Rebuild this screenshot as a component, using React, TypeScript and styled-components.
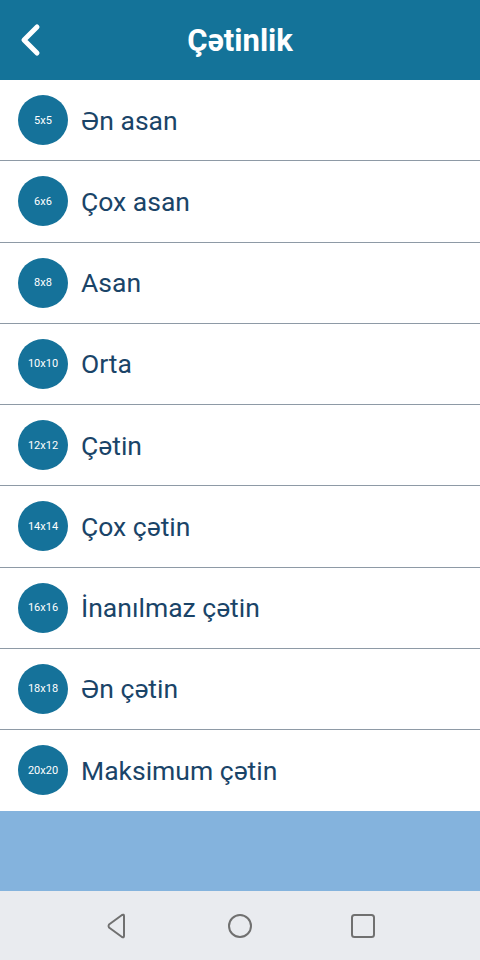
import styled, { createGlobalStyle } from 'styled-components';

const GlobalStyle = createGlobalStyle`
  html, body {
    margin: 0;
    padding: 0;
    background: #ffffff;
  }
  body {
    font-family: Roboto, 'Noto Sans', sans-serif;
  }
`;

const levels = [
  { size: '5x5', label: 'Ən asan' },
  { size: '6x6', label: 'Çox asan' },
  { size: '8x8', label: 'Asan' },
  { size: '10x10', label: 'Orta' },
  { size: '12x12', label: 'Çətin' },
  { size: '14x14', label: 'Çox çətin' },
  { size: '16x16', label: 'İnanılmaz çətin' },
  { size: '18x18', label: 'Ən çətin' },
  { size: '20x20', label: 'Maksimum çətin' },
];

const StyledScreen = styled.div`
  width: 480px;
  height: 960px;
  display: flex;
  flex-direction: column;
  overflow: hidden;
`;

const StyledHeader = styled.header`
  height: 80px;
  flex-shrink: 0;
  display: flex;
  align-items: center;
  justify-content: center;
  position: relative;
  background: #147399;
`;

const StyledBack = styled.button`
  position: absolute;
  left: 14px;
  top: 22px;
  width: 32px;
  height: 36px;
  padding: 0;
  border: none;
  background: none;
  display: flex;
  align-items: center;
  justify-content: center;
`;

const StyledTitle = styled.h1`
  margin: 0;
  color: #ffffff;
  font-size: 31px;
  font-weight: 700;
`;

const StyledList = styled.ul`
  list-style: none;
  margin: 0;
  padding: 0;
`;

const StyledRow = styled.li`
  height: 80.25px;
  display: flex;
  align-items: center;
  gap: 13px;
  padding-left: 18px;
  border-bottom: 1px solid #8e9aa6;

  &:last-child {
    border-bottom: none;
  }
`;

const StyledBadge = styled.span`
  width: 50px;
  height: 50px;
  border-radius: 50%;
  background: #15729a;
  color: #ffffff;
  display: flex;
  align-items: center;
  justify-content: center;
  font-size: 11px;
  flex-shrink: 0;
`;

const StyledLabel = styled.span`
  color: #1a4468;
  font-size: 26.5px;
`;

const StyledBand = styled.div`
  height: 80px;
  margin-top: 1px;
  background: #84b3dd;
`;

const StyledNavBar = styled.nav`
  flex: 1;
  background: #e9ebef;
  display: flex;
  align-items: center;
  justify-content: center;
  gap: 95px;
`;

const StyledNavIcon = styled.svg`
  width: 28px;
  height: 28px;
`;

export default function App() {
  return (
    <>
      <GlobalStyle />
      <StyledScreen>
        <StyledHeader>
          <StyledBack aria-label='back'>
            <svg width='26' height='34' viewBox='0 0 26 34'>
              <path d='M20 4 L7 17 L20 30' fill='none' stroke='#fff' strokeWidth='5' strokeLinecap='round' strokeLinejoin='round' />
            </svg>
          </StyledBack>
          <StyledTitle>Çətinlik</StyledTitle>
        </StyledHeader>
        <StyledList>
          {levels.map(level => (
            <StyledRow key={level.size}>
              <StyledBadge>{level.size}</StyledBadge>
              <StyledLabel>{level.label}</StyledLabel>
            </StyledRow>
          ))}
        </StyledList>
        <StyledBand />
        <StyledNavBar>
          <StyledNavIcon viewBox='0 0 28 28'>
            <path d='M21 4 L21 24 Q21 26 19 25 L6 15.5 Q5 14 6 12.5 L19 3 Q21 2 21 4 Z' fill='none' stroke='#707070' strokeWidth='2' strokeLinejoin='round' />
          </StyledNavIcon>
          <StyledNavIcon viewBox='0 0 28 28'>
            <circle cx='14' cy='14' r='11' fill='none' stroke='#707070' strokeWidth='2' />
          </StyledNavIcon>
          <StyledNavIcon viewBox='0 0 28 28'>
            <rect x='3' y='3' width='22' height='22' rx='2.5' fill='none' stroke='#707070' strokeWidth='2' />
          </StyledNavIcon>
        </StyledNavBar>
      </StyledScreen>
    </>
  );
}
